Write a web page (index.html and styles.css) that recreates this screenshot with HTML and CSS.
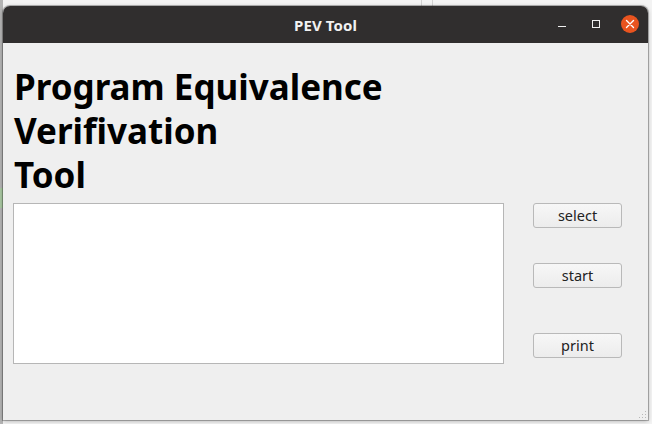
FILE: index.html
```html
<!DOCTYPE html>
<html>
<head>
<meta charset="utf-8">
<link rel="stylesheet" href="styles.css">
</head>
<body>
<div class="desktop">
  <div class="bg-line l1"></div>
  <div class="bg-line l2"></div>
  <div class="bg-green"></div>
  <div class="window">
    <div class="titlebar">
      <span class="title">PEV Tool</span>
      <div class="controls">
        <span class="ctl min"></span>
        <span class="ctl max"></span>
        <span class="ctl close">
          <svg width="18" height="18" viewBox="0 0 18 18"><path d="M5.5 5.5 L12.5 12.5 M12.5 5.5 L5.5 12.5" stroke="#fff" stroke-width="1.4" stroke-linecap="round"/></svg>
        </span>
      </div>
    </div>
    <div class="content">
      <h1 class="heading">Program Equivalence<br>Verifivation<br>Tool</h1>
      <div class="main-row">
        <div class="textbox"></div>
        <div class="buttons">
          <button class="btn b-select">select</button>
          <button class="btn b-start">start</button>
          <button class="btn b-print">print</button>
        </div>
      </div>
      <div class="grip">
        <svg width="10" height="10" viewBox="0 0 10 10" fill="#b8b8b8"><rect x="8" y="2" width="1" height="1"/><rect x="5" y="5" width="1" height="1"/><rect x="8" y="5" width="1" height="1"/><rect x="2" y="8" width="1" height="1"/><rect x="5" y="8" width="1" height="1"/><rect x="8" y="8" width="1" height="1"/></svg>
      </div>
    </div>
  </div>
</div>
</body>
</html>
```
FILE: styles.css
```css
html, body {
  margin: 0;
  padding: 0;
}
body {
  width: 652px;
  height: 424px;
  overflow: hidden;
  background: #f3f3f3;
  font-family: "Noto Sans", "DejaVu Sans", sans-serif;
}
.desktop {
  position: relative;
  width: 652px;
  height: 424px;
  background: linear-gradient(to right, #b4b4b4 0 3px, #f3f3f3 3px);
}
.bg-line {
  position: absolute;
  top: 0;
  width: 1px;
  height: 8px;
  background: #d2d2d2;
}
.l1 { left: 421px; }
.l2 { left: 432px; }
.bg-green {
  position: absolute;
  left: 0;
  top: 188px;
  width: 3px;
  height: 20px;
  background: #a9c8a2;
}
.window {
  position: absolute;
  left: 3px;
  top: 6px;
  width: 645px;
  height: 414px;
  background: #efefef;
  border-radius: 7px 7px 0 0;
  box-shadow: 0 0 0 1px rgba(0,0,0,0.25), 0 1px 4px rgba(0,0,0,0.3);
  display: flex;
  flex-direction: column;
  overflow: hidden;
}
.titlebar {
  height: 37px;
  flex: none;
  background: #302e2e;
  position: relative;
  display: flex;
  align-items: center;
  justify-content: center;
}
.title {
  color: #f2f2f2;
  font-weight: 700;
  font-size: 15px;
  letter-spacing: 0.1px;
}
.controls {
  position: absolute;
  right: 9px;
  top: 9px;
  display: flex;
  align-items: center;
}
.ctl {
  display: block;
  flex: none;
}
.min {
  width: 8px;
  height: 1px;
  background: #f0f0f0;
  margin-top: 5px;
  margin-right: 26px;
}
.max {
  width: 6px;
  height: 6px;
  border: 1px solid #f0f0f0;
  margin-right: 21px;
}
.close {
  width: 18px;
  height: 18px;
  border-radius: 50%;
  background: #e9541f;
}
.close svg { display: block; }
.content {
  flex: 1;
  position: relative;
  padding: 0 10px;
}
.heading {
  margin: 22px 0 0 1px;
  font-family: "Noto Sans", sans-serif;
  font-weight: 700;
  font-size: 35px;
  line-height: 44px;
  color: #000;
  letter-spacing: 0;
}
.main-row {
  display: flex;
  margin-top: 6px;
}
.textbox {
  width: 489px;
  height: 159px;
  background: #fff;
  border: 1px solid #b6b6b6;
  flex: none;
}
.buttons {
  display: flex;
  flex-direction: column;
  margin-left: 29px;
}
.btn {
  width: 89px;
  height: 25px;
  box-sizing: border-box;
  border: 1px solid #b9b9b9;
  border-radius: 3px;
  background: linear-gradient(#f7f7f7, #ececec);
  font-family: "Noto Sans", sans-serif;
  font-size: 14.5px;
  color: #222;
  padding: 0;
  line-height: 21px;
}
.b-start { margin-top: 35px; }
.b-print { margin-top: 45px; }
.grip {
  position: absolute;
  right: 1px;
  bottom: 1px;
  width: 10px;
  height: 10px;
}
.grip svg { display: block; }
```
